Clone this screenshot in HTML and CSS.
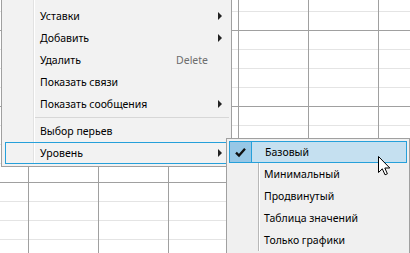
FILE: index.html
```html
<!DOCTYPE html>
<html>
<head>
<meta charset="utf-8">
<link rel="stylesheet" href="styles.css">
</head>
<body>
<div class="sheet">
  <div class="menu main">
    <div class="item"><span class="label">Уставки</span><span class="arrow"></span></div>
    <div class="item"><span class="label">Добавить</span><span class="arrow"></span></div>
    <div class="item"><span class="label">Удалить</span><span class="key">Delete</span></div>
    <div class="item"><span class="label">Показать связи</span></div>
    <div class="item"><span class="label">Показать сообщения</span><span class="arrow"></span></div>
    <div class="sep"></div>
    <div class="item"><span class="label">Выбор перьев</span></div>
    <div class="item open"><span class="label">Уровень</span><span class="arrow"></span></div>
  </div>
  <div class="menu sub">
    <div class="item hot"><span class="check"><svg width="11" height="11" viewBox="0 0 11 11"><path d="M1 5.6 L4 8.6 L10 1.8" fill="none" stroke="#111" stroke-width="2.3"/></svg></span><span class="label">Базовый</span></div>
    <div class="item"><span class="check"></span><span class="label">Минимальный</span></div>
    <div class="item"><span class="check"></span><span class="label">Продвинутый</span></div>
    <div class="item"><span class="check"></span><span class="label">Таблица значений</span></div>
    <div class="item"><span class="check"></span><span class="label">Только графики</span></div>
  </div>
  <svg class="cursor" width="13" height="20" viewBox="0 0 13 20"><path d="M0.5 0.5 L0.5 16.5 L4.3 12.8 L7 18.8 L9.4 17.8 L6.8 12 L11.8 12 Z" fill="#fff" stroke="#000" stroke-width="1" stroke-linejoin="miter"/></svg>
</div>
</body>
</html>
```
FILE: styles.css
```css
html, body {
  margin: 0;
  padding: 0;
  background: #fff;
  overflow: hidden;
}
.sheet {
  position: relative;
  width: 410px;
  height: 253px;
  overflow: hidden;
  background-color: #fff;
  background-image:
    linear-gradient(to right, #a0a0a0 1px, transparent 1px),
    linear-gradient(to bottom, #a0a0a0 1px, transparent 1px),
    linear-gradient(to bottom, #e4e4e4 1px, transparent 1px);
  background-size: 70px 100%, 100% 76px, 100% 19px;
  background-position: 28px 0, 0 30px, 0 11px;
  font-family: "Noto Sans", "Open Sans", sans-serif;
  font-size: 10.5px;
  color: #000;
}
.menu {
  position: absolute;
  box-sizing: border-box;
  background: #f2f2f2;
  border: 1px solid #a0a0a0;
}
.main {
  left: 1px;
  top: -2px;
  width: 231px;
  padding: 6px 2px 2px 3px;
}
.main::before {
  content: "";
  position: absolute;
  left: 31px;
  top: 0;
  bottom: 2px;
  width: 1px;
  background: #e2e2e2;
  border-right: 1px solid #fff;
}
.sub {
  left: 226px;
  top: 138px;
  width: 184px;
  height: 130px;
  padding: 2px 2px;
  background: #f0f0f0;
}
.sub::before {
  content: "";
  position: absolute;
  left: 31px;
  top: 2px;
  height: 110px;
  width: 1px;
  background: #b8b8b8;
  border-right: 1px solid #fff;
}
.item {
  position: relative;
  box-sizing: border-box;
  height: 22px;
  display: flex;
  align-items: center;
  border: 1px solid transparent;
}
.main .label {
  padding-left: 34px;
  flex: 1;
}
.main .item.open {
  border-color: #26a0da;
}
.key {
  color: #6d6d6d;
  margin-right: 20px;
}
.arrow {
  width: 0;
  height: 0;
  border-left: 4px solid #222;
  border-top: 4px solid transparent;
  border-bottom: 4px solid transparent;
  margin-right: 6px;
}
.sep {
  height: 1px;
  margin: 2px 0 2px 30px;
  background: #d7d7d7;
}
.sub .check {
  width: 21px;
  height: 20px;
  display: flex;
  align-items: center;
  justify-content: center;
}
.sub .label {
  padding-left: 13px;
}
.sub .item.hot {
  background: #c5e0f0;
  border-color: #26a0da;
}
.sub .item.hot .check {
  background: #97c7e6;
  border-right: 1px solid #26a0da;
}
.cursor {
  position: absolute;
  left: 378px;
  top: 156px;
}
```
